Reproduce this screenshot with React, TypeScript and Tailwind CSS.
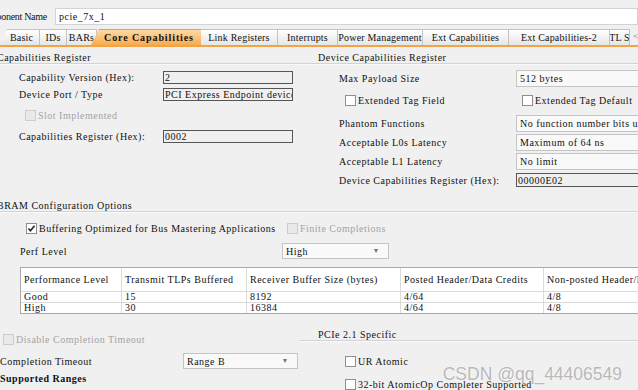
import React from "react";

const tabs = [
  { label: "Basic", w: "w-[40px] [clip-path:polygon(7px_0,100%_0,100%_100%,0_100%)] pl-[4px]" },
  { label: "IDs", w: "w-[27px]" },
  { label: "BARs", w: "w-[30px]" },
  { label: "Core Capabilities", w: "ml-[-6px] w-[110px] pl-[6px] [clip-path:polygon(8px_0,100%_0,100%_100%,0_100%)]", active: true },
  { label: "Link Registers", w: "w-[77px]" },
  { label: "Interrupts", w: "w-[60px]" },
  { label: "Power Management", w: "w-[85px]" },
  { label: "Ext Capabilities", w: "w-[86px]" },
  { label: "Ext Capabilities-2", w: "w-[101px]" },
  { label: "TL S", w: "w-[20px]" },
];

function Check({ checked = false, disabled = false }: { checked?: boolean; disabled?: boolean }) {
  return (
    <span
      className={
        disabled
          ? "flex h-[11px] w-[11px] shrink-0 items-center justify-center border border-[#cdcdcd] bg-[#e9e9e9]"
          : "flex h-[11px] w-[11px] shrink-0 items-center justify-center border border-[#8e8e8e] bg-white"
      }
    >
      {checked && (
        <svg width="9" height="9" viewBox="0 0 9 9">
          <path d="M1.5 4.5 L3.5 6.8 L7.5 1.8" stroke="#222" strokeWidth="1.6" fill="none" />
        </svg>
      )}
    </span>
  );
}

function CheckLabel({ label, checked, disabled, className = "" }: { label: string; checked?: boolean; disabled?: boolean; className?: string }) {
  return (
    <div className={`flex items-center gap-[2px] ${className}`}>
      <Check checked={checked} disabled={disabled} />
      <span className={disabled ? "text-[#a3a3a3]" : ""}>{label}</span>
    </div>
  );
}

function Select({ value, className = "", arrow = true }: { value: string; className?: string; arrow?: boolean }) {
  return (
    <div className={`flex shrink-0 items-center justify-between border border-[#c4c4c4] bg-[#f9f9f9] pl-[3px] pr-[8px] ${className}`}>
      <span className="whitespace-nowrap">{value}</span>
      {arrow && <span className="text-[7px] text-[#777]">▼</span>}
    </div>
  );
}

function Field({ value, className = "" }: { value: string; className?: string }) {
  return (
    <div className={`flex shrink-0 items-center overflow-hidden whitespace-nowrap border border-[#555] bg-[#f0f0f0] pl-[1px] ${className}`}>
      {value}
    </div>
  );
}

function Header({ title, className = "" }: { title: string; className?: string }) {
  return (
    <div className={className}>
      <div className="flex h-[10px] items-center">{title}</div>
      <div className="mt-[1px] h-px bg-[#d3d3d3]" />
      <div className="h-px bg-white/60" />
    </div>
  );
}

const rows = [
  ["Good", "15", "8192", "4/64", "4/8"],
  ["High", "30", "16384", "4/64", "4/8"],
];

export default function App() {
  return (
    <div className="relative h-[390px] w-[638px] overflow-hidden bg-[#f0f0f0] [font-family:'Liberation_Serif',serif] text-[10px] tracking-[0.5px] text-[#111]">
      {/* component name */}
      <div className="mt-[8px] flex h-[17px] items-center">
        <span className="ml-[-22px] w-[77px] shrink-0 whitespace-nowrap tracking-[-0.3px]">Component Name</span>
        <div className="flex h-[17px] flex-1 items-center border border-[#d4d4d4] bg-white pl-[3px]">pcie_7x_1</div>
      </div>

      {/* tabs */}
      <div className="mt-[4px] flex h-[16px] items-stretch">
        {tabs.map((t) => (
          <div
            key={t.label}
            className={
              t.active
                ? `${t.w} flex shrink-0 items-center justify-center overflow-hidden whitespace-nowrap border-t border-[#e0a050] bg-gradient-to-b from-[#fed9a4] to-[#f8aa4c] font-bold tracking-[0.9px]`
                : `${t.w} flex shrink-0 items-center justify-center overflow-hidden whitespace-nowrap border-r border-t border-[#c3c3c3] bg-gradient-to-b from-white to-[#e6e6e6] tracking-[0.2px]`
            }
          >
            {t.label}
          </div>
        ))}
        <span className="ml-[3px] flex items-center text-[9px] text-[#666]">&lt;</span>
      </div>
      <div className="h-[2px] bg-[#f2a444]" />

      {/* capabilities registers */}
      <div className="mt-[5px] flex">
        <div className="ml-[-3px] w-[303px] shrink-0">
          <Header title="Capabilities Register" />
          <div className="mt-[6px] flex h-[13px] items-center pl-[22px]">
            <span className="w-[144px] shrink-0">Capability Version (Hex):</span>
            <Field value="2" className="h-[13px] w-[130px]" />
          </div>
          <div className="mt-[4px] flex h-[13px] items-center pl-[22px]">
            <span className="w-[144px] shrink-0">Device Port / Type</span>
            <Field value="PCI Express Endpoint device" className="h-[13px] w-[130px]" />
          </div>
          <CheckLabel label="Slot Implemented" disabled className="mt-[9px] h-[11px] pl-[28px]" />
          <div className="mt-[9px] flex h-[13px] items-center pl-[22px]">
            <span className="w-[144px] shrink-0">Capabilities Register (Hex):</span>
            <Field value="0002" className="h-[13px] w-[130px]" />
          </div>
        </div>
        <div className="flex-1">
          <Header title="Device Capabilities Register" className="[&>div:first-child]:pl-[18px]" />
          <div className="mt-[5px] flex h-[17px] items-center pl-[39px]">
            <span className="w-[177px] shrink-0">Max Payload Size</span>
            <Select value="512 bytes" arrow={false} className="h-[17px] w-[140px]" />
          </div>
          <div className="mt-[8px] flex h-[11px] items-center pl-[45px]">
            <CheckLabel label="Extended Tag Field" className="w-[177px] shrink-0" />
            <CheckLabel label="Extended Tag Default" className="shrink-0 whitespace-nowrap" />
          </div>
          <div className="mt-[9px] flex h-[17px] items-center pl-[39px]">
            <span className="w-[177px] shrink-0">Phantom Functions</span>
            <Select value="No function number bits used" arrow={false} className="h-[17px] w-[140px]" />
          </div>
          <div className="mt-[2px] flex h-[17px] items-center pl-[39px]">
            <span className="w-[177px] shrink-0">Acceptable L0s Latency</span>
            <Select value="Maximum of 64 ns" arrow={false} className="h-[17px] w-[140px]" />
          </div>
          <div className="mt-[2px] flex h-[17px] items-center pl-[39px]">
            <span className="w-[177px] shrink-0">Acceptable L1 Latency</span>
            <Select value="No limit" arrow={false} className="h-[17px] w-[140px]" />
          </div>
          <div className="mt-[3px] flex h-[14px] items-center pl-[39px]">
            <span className="w-[177px] shrink-0 whitespace-nowrap">Device Capabilities Register (Hex):</span>
            <Field value="00000E02" className="h-[14px] w-[140px]" />
          </div>
        </div>
      </div>

      {/* BRAM */}
      <div className="ml-[-3px]">
        <Header title="BRAM Configuration Options" className="mt-[13px]" />
        <div className="mt-[10px] flex h-[11px] items-center pl-[29px]">
          <CheckLabel label="Buffering Optimized for Bus Mastering Applications" checked className="w-[261px] shrink-0 whitespace-nowrap" />
          <CheckLabel label="Finite Completions" disabled className="shrink-0" />
        </div>
        <div className="mt-[9px] flex h-[16px] items-center pl-[23px]">
          <span className="w-[262px] shrink-0">Perf Level</span>
          <Select value="High" className="h-[16px] w-[107px]" />
        </div>
        <div className="ml-[23px] mt-[8px] w-[640px] border border-[#a9a9a9] bg-white">
          <div className="grid h-[23px] grid-cols-[101px_125px_154px_143px_120px] items-center">
            {["Performance Level", "Transmit TLPs Buffered", "Receiver Buffer Size (bytes)", "Posted Header/Data Credits", "Non-posted Header/Data Credits"].map((h) => (
              <div key={h} className="flex h-full items-center overflow-hidden whitespace-nowrap border-r border-[#dadada] pl-[3px]">
                {h}
              </div>
            ))}
          </div>
          {rows.map((r) => (
            <div key={r[0]} className="grid h-[11px] grid-cols-[101px_125px_154px_143px_120px] border-t border-[#dadada]">
              {r.map((c, i) => (
                <div key={i} className="flex h-full items-center border-r border-[#dadada] pl-[3px] leading-none">
                  {c}
                </div>
              ))}
            </div>
          ))}
        </div>
      </div>

      {/* bottom */}
      <div className="flex">
        <div className="ml-[-3px] w-[303px] shrink-0">
          <CheckLabel label="Disable Completion Timeout" disabled className="mt-[20px] h-[11px] pl-[6px]" />
          <div className="mt-[8px] flex h-[16px] items-center pl-[3px]">
            <span className="w-[183px] shrink-0">Completion Timeout</span>
            <Select value="Range B" className="h-[16px] w-[115px]" />
          </div>
          <div className="mt-[4px] flex h-[11px] items-center pl-[3px] font-bold">Supported Ranges</div>
        </div>
        <div className="flex-1">
          <Header title="PCIe 2.1 Specific" className="mt-[15px] [&>div:first-child]:pl-[18px]" />
          <CheckLabel label="UR Atomic" className="mt-[14px] h-[11px] pl-[45px]" />
          <CheckLabel label="32-bit AtomicOp Completer Supported" className="mt-[12px] h-[11px] pl-[45px] whitespace-nowrap" />
        </div>
      </div>

      <div className="absolute right-[16px] top-[361px] whitespace-nowrap [font-family:'Liberation_Sans',sans-serif] text-[17.5px] tracking-normal text-[#b0b0b0]/90 [text-shadow:0_0_2px_white]">
        CSDN @qq_44406549
      </div>
    </div>
  );
}
